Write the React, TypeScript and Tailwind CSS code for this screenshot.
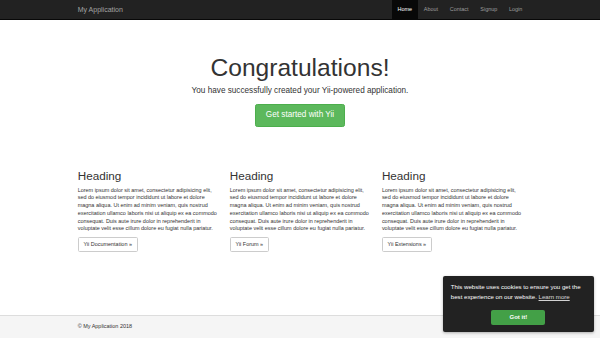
import React from "react";

const lorem =
  "Lorem ipsum dolor sit amet, consectetur adipisicing elit, sed do eiusmod tempor incididunt ut labore et dolore magna aliqua. Ut enim ad minim veniam, quis nostrud exercitation ullamco laboris nisi ut aliquip ex ea commodo consequat. Duis aute irure dolor in reprehenderit in voluptate velit esse cillum dolore eu fugiat nulla pariatur.";

const cols = [
  { btn: "Yii Documentation \u00bb" },
  { btn: "Yii Forum \u00bb" },
  { btn: "Yii Extensions \u00bb" },
];

export default function App() {
  return (
    <div className="relative flex h-[338px] w-[600px] flex-col overflow-hidden bg-white font-['Liberation_Sans',Arial,sans-serif] text-[#333]">
      {/* Navbar */}
      <nav className="h-[19.9px] shrink-0 border-b-[0.4px] border-[#080808] bg-[#222]">
        <div className="mx-auto flex h-full w-[456.3px] items-center justify-between">
          <span className="pl-[5.85px] text-[7px] leading-[7.8px] text-[#a3a3a3]">My Application</span>
          <ul className="flex h-full items-stretch text-[5.46px] leading-[7.8px]">
            <li className="flex items-center bg-[#080808] px-[5.85px] text-white">Home</li>
            <li className="flex items-center px-[5.85px] text-[#9d9d9d]">About</li>
            <li className="flex items-center px-[5.85px] text-[#9d9d9d]">Contact</li>
            <li className="flex items-center px-[5.85px] text-[#9d9d9d]">Signup</li>
            <li className="flex items-center px-[5.85px] text-[#9d9d9d]">Login</li>
          </ul>
        </div>
      </nav>

      {/* Main */}
      <main className="mx-auto w-[456.3px] px-[5.85px] pt-[7.4px]">
        <section className="pb-[17.2px] pt-[18.7px] text-center">
          <h1 className="mb-[3.9px] mt-[7.8px] text-[24.6px] font-medium leading-[27px]">Congratulations!</h1>
          <p className="mb-[7.35px] text-[8.2px] font-light leading-[11.5px]">
            You have successfully created your Yii-powered application.
          </p>
          <div className="mb-[5.85px] flex justify-center">
            <span className="rounded-[2.3px] border-[0.4px] border-[#4cae4c] bg-[#5cb85c] px-[9.4px] py-[5.4px] text-[8.2px] leading-[10.9px] text-white">
              Get started with Yii
            </span>
          </div>
        </section>

        <div className="mx-[-5.85px] mt-[11.7px] grid grid-cols-3">
          {cols.map((c) => (
            <div key={c.btn} className="px-[5.85px]">
              <h2 className="mb-[3.9px] mt-[7.8px] text-[11.7px] font-medium leading-[12.9px]">Heading</h2>
              <p className="mb-[3.9px] text-[5.46px] leading-[7.8px]">{lorem}</p>
              <div className="flex">
                <span className="rounded-[1.6px] border-[0.5px] border-[#ccc] bg-white px-[4.7px] py-[2.35px] text-[5.46px] leading-[7.8px] text-[#333]">
                  {c.btn}
                </span>
              </div>
            </div>
          ))}
        </div>
      </main>

      {/* Footer */}
      <footer className="mt-auto h-[23.4px] shrink-0 border-t-[0.4px] border-[#ddd] bg-[#f5f5f5] pt-[7.8px]">
        <div className="mx-auto w-[456.3px] px-[5.85px] text-[5.46px] leading-[7.8px] text-[#333]">
          &copy; My Application 2018
        </div>
      </footer>

      {/* Cookie banner */}
      <div className="absolute bottom-[6.5px] right-[6.2px] w-[151px] rounded-[2px] bg-[#222] px-[8px] pb-[7px] pt-[6px] text-[6.1px] leading-[10px] text-white shadow-[0_1px_3px_rgba(0,0,0,0.3)]">
        <p className="whitespace-nowrap">This website uses cookies to ensure you get the</p>
        <div className="flex gap-[1.7px] whitespace-nowrap">
          <span>best experience on our website.</span>
          <a className="underline opacity-80">Learn more</a>
        </div>
        <div className="mt-[8px] flex justify-center">
          <span className="flex h-[15px] w-[54px] items-center justify-center rounded-[2px] bg-[#43a047] text-[6px] font-bold text-white">
            Got it!
          </span>
        </div>
      </div>
    </div>
  );
}
